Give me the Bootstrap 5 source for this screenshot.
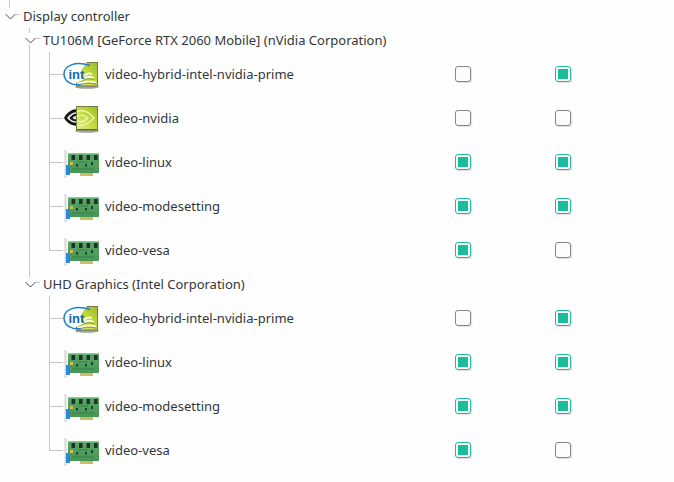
<!DOCTYPE html>
<html lang="en">
<head>
  <meta charset="UTF-8">
  <title>Display controller</title>
  <link href="https://cdn.jsdelivr.net/npm/bootstrap@5.3.3/dist/css/bootstrap.min.css" rel="stylesheet">
  <style>
    html, body {
      height: 100%;
      overflow: hidden;
    }
    body {
      background-color: #fefefe;
      color: #31363b;
      font-family: "Noto Sans", sans-serif;
      font-size: 13px;
    }
    .tree-cap {
      height: 4px;
      margin-left: 9px;
      width: 1px;
      background-color: #c4c6c8;
    }
    .branch-row {
      height: 24px;
    }
    .branch-row.device {
      padding-left: 20px;
    }
    .branch-row span,
    .pkg-name {
      padding-top: 2px;
    }
    .branch-toggle {
      width: 20px;
      height: 24px;
      flex: none;
      margin-right: 3px;
      display: block;
    }
    .leaf-row {
      height: 44px;
    }
    .rail {
      width: 49px;
      height: 100%;
      flex: none;
    }
    .rail.on {
      background: linear-gradient(#c4c6c8, #c4c6c8) 29px 0 / 1px 100% no-repeat;
    }
    .stub {
      width: 14px;
      height: 100%;
      flex: none;
      background:
        linear-gradient(#c4c6c8, #c4c6c8) 0 0 / 1px 100% no-repeat,
        linear-gradient(#c4c6c8, #c4c6c8) 0 22px / 100% 1px no-repeat;
    }
    .leaf-row:last-child .stub {
      background:
        linear-gradient(#c4c6c8, #c4c6c8) 0 0 / 1px 22px no-repeat,
        linear-gradient(#c4c6c8, #c4c6c8) 0 22px / 100% 1px no-repeat;
    }
    .pkg-icon {
      width: 36px;
      height: 36px;
      flex: none;
      margin-right: 6px;
    }
    .pkg-name {
      flex: 1 1 auto;
      min-width: 0;
    }
    .check-cell {
      width: 100px;
      flex: none;
    }
    .last-gap {
      width: 19px;
      flex: none;
    }
    .check-cell .form-check-input {
      display: block;
      width: 16px;
      height: 16px;
      margin: 0;
      border: 1px solid #85888b;
      border-radius: 3px;
      background-color: #fdfdfd;
      box-shadow: 1px 1px 1px rgba(0, 0, 0, .12);
    }
    .check-cell .form-check-input:checked {
      border-color: #1abc9c;
      background: linear-gradient(#1abc9c, #1abc9c) center / 10px 10px no-repeat #fdfdfd;
    }
  </style>
</head>
<body>
  <svg width="0" height="0" class="d-block">
    <defs>
      <symbol id="toggle-root" viewBox="0 0 20 24">
        <path d="M9.5 0 V4" stroke="#c4c6c8" stroke-width="1"/>
        <path d="M5.5 10 L10.5 15 L15.5 10" fill="none" stroke="#4d5256" stroke-width="1"/>
        <path d="M16 10.5 H20" stroke="#c4c6c8" stroke-width="1"/>
      </symbol>
      <symbol id="toggle-stem" viewBox="0 0 20 24">
        <path d="M9.5 0 V5 M9.5 17 V24" stroke="#c4c6c8" stroke-width="1"/>
        <path d="M5.5 10 L10.5 15 L15.5 10" fill="none" stroke="#4d5256" stroke-width="1"/>
        <path d="M16 10.5 H20" stroke="#c4c6c8" stroke-width="1"/>
      </symbol>
      <symbol id="toggle-end" viewBox="0 0 20 24">
        <path d="M9.5 0 V5" stroke="#c4c6c8" stroke-width="1"/>
        <path d="M5.5 10 L10.5 15 L15.5 10" fill="none" stroke="#4d5256" stroke-width="1"/>
        <path d="M16 10.5 H20" stroke="#c4c6c8" stroke-width="1"/>
      </symbol>
      <linearGradient id="lime" x1="0" y1="1" x2="1" y2="0">
        <stop offset="0" stop-color="#e3ec8e"/>
        <stop offset=".5" stop-color="#c3dc3e"/>
        <stop offset="1" stop-color="#9abc2a"/>
      </linearGradient>
      <linearGradient id="pcb" x1="0" y1="0" x2="0" y2="1">
        <stop offset="0" stop-color="#5aa868"/>
        <stop offset="1" stop-color="#479655"/>
      </linearGradient>
      <symbol id="nv-square" viewBox="0 0 36 36">
        <ellipse cx="24" cy="31" rx="12" ry="1.8" fill="#444" opacity=".5"/>
        <rect x="13.5" y="6.5" width="21" height="23.5" fill="url(#lime)" stroke="#727c40"/>
      </symbol>
      <symbol id="card" viewBox="0 0 36 36">
        <rect x="1.5" y="6" width="2" height="28" fill="#d5d7d8"/>
        <rect x="5" y="9" width="31" height="20" fill="url(#pcb)"/>
        <rect x="5" y="9" width="31" height="1.2" fill="#8acb9c"/>
        <rect x="3" y="21" width="4" height="10" fill="#2f86dc"/>
        <rect x="17" y="29" width="13" height="3" fill="#c9bd66"/>
        <rect x="8.5" y="11" width="3.6" height="5" fill="#26302a"/>
        <rect x="16" y="11" width="3.6" height="5" fill="#26302a"/>
        <rect x="23.5" y="11" width="3.6" height="5" fill="#26302a"/>
        <rect x="31" y="11" width="3.6" height="5" fill="#26302a"/>
        <rect x="7" y="18" width="3" height="3" fill="#c8c060"/>
        <rect x="13" y="20" width="2" height="2.5" fill="#20402c"/>
        <rect x="22" y="20" width="2" height="2.5" fill="#20402c"/>
        <rect x="28" y="18" width="2" height="3" fill="#20402c"/>
        <path d="M9 25 H31 M15 18 H25" stroke="#34804f" stroke-width="1"/>
      </symbol>
      <symbol id="intel" viewBox="0 0 36 36">
        <use href="#nv-square"/>
        <path d="M13 6 L24 6 L19 13 L19 23 L13 27 Z" fill="#fefefe"/>
        <path d="M14 29 Q23 24 33 26.5 M18 24.5 Q24 19 31 22 M21 20 Q25 16 29 18" fill="none" stroke="#fff" stroke-width="1.7"/>
        <path d="M14 30 Q23 25.5 33 28 M18 26 Q24 21 31 23.5" fill="none" stroke="#6b7a32" stroke-width=".7"/>
        <path d="M27 9.5 C12 4.5 1 10 1 18 C1 26 10 30 18 28.5" fill="none" stroke="#1d7fd0" stroke-width="1.5"/>
        <text x="5.5" y="22.5" font-family="Liberation Sans, sans-serif" font-weight="700" font-size="13" fill="#1565b0">int</text>
      </symbol>
      <symbol id="nvidia" viewBox="0 0 36 36">
        <path d="M1 18 C7 7 19 6 27 16 C19 29 7 28 1 18 Z" fill="#141414"/>
        <path d="M4 18 C9 10.5 17 10.5 23 17 C17 24.5 9 24.5 4 18 Z" fill="#e8e8e8"/>
        <path d="M6.5 18 C10 12.5 16 12.5 20 17 C16 22.5 10 22.5 6.5 18 Z" fill="#141414"/>
        <path d="M9.5 18 C11 15.5 14 15.5 16 17.5 C14 20 11 20 9.5 18 Z" fill="#d8d8d8"/>
        <use href="#nv-square"/>
        <path d="M14 12 C21 8.5 27 13 31 18 C26 23 20 27 14 25 M14 16.5 C19 14 22 16 25 18 C22 21 18 23 14 21" fill="none" stroke="#eef5b0" stroke-width="1.4"/>
        <path d="M14 29.5 H34" stroke="#5c6a2c" stroke-width="1"/>
      </symbol>
    </defs>
  </svg>

  <div class="tree-cap"></div>
  <div class="branch-row d-flex align-items-center">
    <svg class="branch-toggle"><use href="#toggle-root"/></svg>
    <span>Display controller</span>
  </div>

  <div class="branch-row device d-flex align-items-center">
    <svg class="branch-toggle"><use href="#toggle-stem"/></svg>
    <span>TU106M [GeForce RTX 2060 Mobile] (nVidia Corporation)</span>
  </div>
  <div class="leaf-group">
    <div class="leaf-row d-flex align-items-center">
      <div class="rail on"></div><div class="stub"></div>
      <svg class="pkg-icon"><use href="#intel"/></svg>
      <div class="pkg-name">video-hybrid-intel-nvidia-prime</div>
      <div class="check-cell"><input class="form-check-input" type="checkbox"></div>
      <div class="check-cell"><input class="form-check-input" type="checkbox" checked></div>
      <div class="last-gap"></div>
    </div>
    <div class="leaf-row d-flex align-items-center">
      <div class="rail on"></div><div class="stub"></div>
      <svg class="pkg-icon"><use href="#nvidia"/></svg>
      <div class="pkg-name">video-nvidia</div>
      <div class="check-cell"><input class="form-check-input" type="checkbox"></div>
      <div class="check-cell"><input class="form-check-input" type="checkbox"></div>
      <div class="last-gap"></div>
    </div>
    <div class="leaf-row d-flex align-items-center">
      <div class="rail on"></div><div class="stub"></div>
      <svg class="pkg-icon"><use href="#card"/></svg>
      <div class="pkg-name">video-linux</div>
      <div class="check-cell"><input class="form-check-input" type="checkbox" checked></div>
      <div class="check-cell"><input class="form-check-input" type="checkbox" checked></div>
      <div class="last-gap"></div>
    </div>
    <div class="leaf-row d-flex align-items-center">
      <div class="rail on"></div><div class="stub"></div>
      <svg class="pkg-icon"><use href="#card"/></svg>
      <div class="pkg-name">video-modesetting</div>
      <div class="check-cell"><input class="form-check-input" type="checkbox" checked></div>
      <div class="check-cell"><input class="form-check-input" type="checkbox" checked></div>
      <div class="last-gap"></div>
    </div>
    <div class="leaf-row d-flex align-items-center">
      <div class="rail on"></div><div class="stub"></div>
      <svg class="pkg-icon"><use href="#card"/></svg>
      <div class="pkg-name">video-vesa</div>
      <div class="check-cell"><input class="form-check-input" type="checkbox" checked></div>
      <div class="check-cell"><input class="form-check-input" type="checkbox"></div>
      <div class="last-gap"></div>
    </div>
  </div>

  <div class="branch-row device d-flex align-items-center">
    <svg class="branch-toggle"><use href="#toggle-end"/></svg>
    <span>UHD Graphics (Intel Corporation)</span>
  </div>
  <div class="leaf-group">
    <div class="leaf-row d-flex align-items-center">
      <div class="rail"></div><div class="stub"></div>
      <svg class="pkg-icon"><use href="#intel"/></svg>
      <div class="pkg-name">video-hybrid-intel-nvidia-prime</div>
      <div class="check-cell"><input class="form-check-input" type="checkbox"></div>
      <div class="check-cell"><input class="form-check-input" type="checkbox" checked></div>
      <div class="last-gap"></div>
    </div>
    <div class="leaf-row d-flex align-items-center">
      <div class="rail"></div><div class="stub"></div>
      <svg class="pkg-icon"><use href="#card"/></svg>
      <div class="pkg-name">video-linux</div>
      <div class="check-cell"><input class="form-check-input" type="checkbox" checked></div>
      <div class="check-cell"><input class="form-check-input" type="checkbox" checked></div>
      <div class="last-gap"></div>
    </div>
    <div class="leaf-row d-flex align-items-center">
      <div class="rail"></div><div class="stub"></div>
      <svg class="pkg-icon"><use href="#card"/></svg>
      <div class="pkg-name">video-modesetting</div>
      <div class="check-cell"><input class="form-check-input" type="checkbox" checked></div>
      <div class="check-cell"><input class="form-check-input" type="checkbox" checked></div>
      <div class="last-gap"></div>
    </div>
    <div class="leaf-row d-flex align-items-center">
      <div class="rail"></div><div class="stub"></div>
      <svg class="pkg-icon"><use href="#card"/></svg>
      <div class="pkg-name">video-vesa</div>
      <div class="check-cell"><input class="form-check-input" type="checkbox" checked></div>
      <div class="check-cell"><input class="form-check-input" type="checkbox"></div>
      <div class="last-gap"></div>
    </div>
  </div>

  <script src="https://cdn.jsdelivr.net/npm/bootstrap@5.3.3/dist/js/bootstrap.bundle.min.js"></script>
</body>
</html>
